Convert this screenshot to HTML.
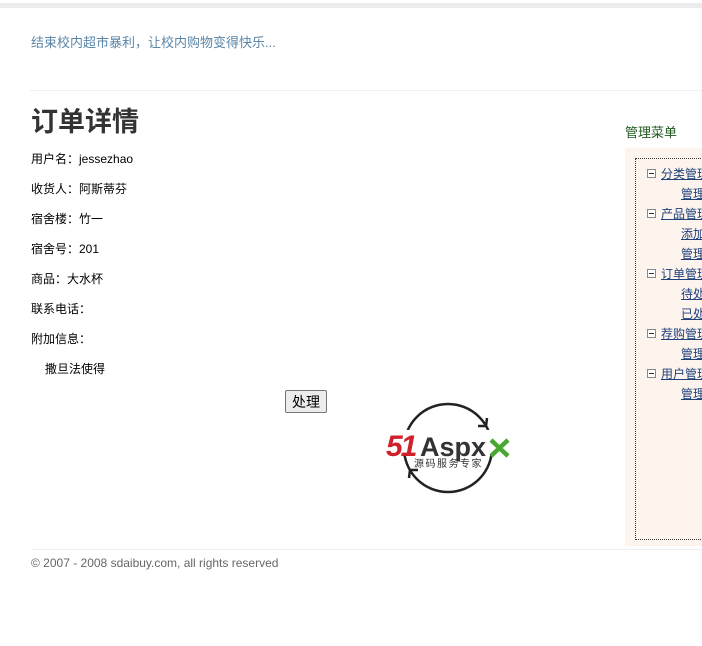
<!DOCTYPE html>
<html><head><meta charset="utf-8"><style>
html,body{margin:0;padding:0;width:702px;height:646px;overflow:hidden;background:#fff;font-family:"Liberation Sans","Noto Sans CJK SC",sans-serif;}
.abs{position:absolute;white-space:nowrap;}
.topbar{position:absolute;left:0;top:3px;width:702px;height:5px;background:#ececec;}
.slogan{left:31px;top:32px;font-size:13px;color:#5a86a8;}
.hr1{position:absolute;left:31px;top:90px;width:671px;border-top:1px dotted #e0e0e0;}
h1{position:absolute;left:31px;top:100px;margin:0;font-size:27px;font-weight:bold;color:#333;}
.f{left:31px;font-size:12px;color:#000;}
.btn{position:absolute;left:285px;top:390px;width:42px;height:23px;border:1px solid #777;background:#ececec;font-size:14px;text-align:center;line-height:22px;box-sizing:border-box;border-radius:2px;}
.mt{left:625px;top:122px;font-size:13px;color:#1f5a1f;}
.panel{position:absolute;left:625px;top:148px;width:77px;height:398px;background:#fdf4ee;}
.box{position:absolute;left:635px;top:158px;width:80px;height:380px;border:1px dotted #333;}
.m{font-size:12px;color:#1e3f7a;text-decoration:underline;}
.ic{position:absolute;width:7px;height:7px;border:1px solid #888;background:#fff;}
.ic:after{content:"";position:absolute;left:1px;top:3px;width:5px;height:1px;background:#333;}
.hr2{position:absolute;left:31px;top:549px;width:671px;border-top:1px solid #eee;}
.foot{left:31px;top:556px;font-size:12px;color:#666;}
</style></head><body>
<div class="topbar"></div>
<div class="abs slogan">结束校内超市暴利，让校内购物变得快乐...</div>
<div class="hr1"></div>
<h1>订单详情</h1>
<div class="abs f" style="top:150px">用户名：jessezhao</div>
<div class="abs f" style="top:180px">收货人：阿斯蒂芬</div>
<div class="abs f" style="top:210px">宿舍楼：竹一</div>
<div class="abs f" style="top:240px">宿舍号：201</div>
<div class="abs f" style="top:270px">商品：大水杯</div>
<div class="abs f" style="top:300px">联系电话：</div>
<div class="abs f" style="top:330px">附加信息：</div>
<div class="abs f" style="top:360px;left:45px">撒旦法使得</div>
<div class="btn">处理</div>
<svg style="position:absolute;left:385px;top:400px" width="130" height="96" viewBox="0 0 130 96">
<circle cx="63" cy="48" r="44" fill="none" stroke="#222" stroke-width="2.5"/>
<rect x="0" y="30" width="130" height="24" fill="#fff"/>
<rect x="26" y="54" width="74" height="14" fill="#fff"/>
<path d="M101 26 l1 -8 M101 26 l-8 0" stroke="#222" stroke-width="2.5"/>
<path d="M25 70 l-1 8 M25 70 l8 0" stroke="#222" stroke-width="2.5"/>
<text x="1" y="56" font-family="Liberation Sans" font-style="italic" font-weight="bold" font-size="30" fill="#d0202a" letter-spacing="-2">51</text>
<text x="35" y="56" font-family="Liberation Sans" font-weight="bold" font-size="27" fill="#333">Aspx</text>
<path d="M106 40 l17 16 M123 40 l-17 16" stroke="#4aa832" stroke-width="4.5"/>
<text x="29" y="67" font-family="Noto Sans CJK SC" font-size="10" fill="#333" letter-spacing="1.5">源码服务专家</text>
</svg>
<div class="abs mt">管理菜单</div>
<div class="panel"></div>
<div class="box"></div>
<div class="ic" style="left:647px;top:169px"></div><div class="abs m" style="left:661px;top:165px">分类管理</div>
<div class="abs m" style="left:681px;top:185px">管理类别</div>
<div class="ic" style="left:647px;top:209px"></div><div class="abs m" style="left:661px;top:205px">产品管理</div>
<div class="abs m" style="left:681px;top:225px">添加产品</div>
<div class="abs m" style="left:681px;top:245px">管理产品</div>
<div class="ic" style="left:647px;top:269px"></div><div class="abs m" style="left:661px;top:265px">订单管理</div>
<div class="abs m" style="left:681px;top:285px">待处理</div>
<div class="abs m" style="left:681px;top:305px">已处理</div>
<div class="ic" style="left:647px;top:329px"></div><div class="abs m" style="left:661px;top:325px">荐购管理</div>
<div class="abs m" style="left:681px;top:345px">管理荐购</div>
<div class="ic" style="left:647px;top:369px"></div><div class="abs m" style="left:661px;top:365px">用户管理</div>
<div class="abs m" style="left:681px;top:385px">管理用户</div>
<div class="hr2"></div>
<div class="abs foot">© 2007 - 2008 sdaibuy.com, all rights reserved</div>
</body></html>
